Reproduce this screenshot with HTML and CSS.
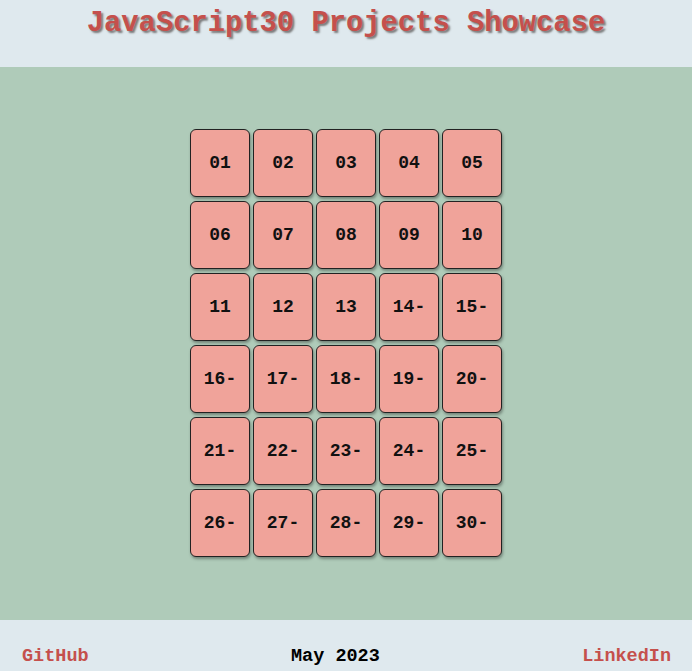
FILE: index.html
```html
<!DOCTYPE html>
<html lang="en">
<head>
<meta charset="utf-8">
<title>JavaScript30 Projects Showcase</title>
<link rel="stylesheet" href="styles.css">
</head>
<body>
<header class="site-header">
  <h1 class="title">JavaScript30 Projects Showcase</h1>
</header>
<main class="main">
  <div class="grid">
    <a class="card">01</a><a class="card">02</a><a class="card">03</a><a class="card">04</a><a class="card">05</a>
    <a class="card">06</a><a class="card">07</a><a class="card">08</a><a class="card">09</a><a class="card">10</a>
    <a class="card">11</a><a class="card">12</a><a class="card">13</a><a class="card">14-</a><a class="card">15-</a>
    <a class="card">16-</a><a class="card">17-</a><a class="card">18-</a><a class="card">19-</a><a class="card">20-</a>
    <a class="card">21-</a><a class="card">22-</a><a class="card">23-</a><a class="card">24-</a><a class="card">25-</a>
    <a class="card">26-</a><a class="card">27-</a><a class="card">28-</a><a class="card">29-</a><a class="card">30-</a>
  </div>
</main>
<footer class="site-footer">
  <a class="foot-link">GitHub</a>
  <span class="date">May 2023</span>
  <a class="foot-link">LinkedIn</a>
</footer>
</body>
</html>
```
FILE: styles.css
```css
html, body {
  margin: 0;
  padding: 0;
}
body {
  font-family: "Liberation Mono", "Courier New", monospace;
  background: #dfe9ee;
  height: 671px;
  overflow: hidden;
}
.site-header {
  height: 67px;
  box-sizing: border-box;
  padding-top: 7px;
  background: #dfe9ee;
}
.title {
  margin: 0;
  text-align: center;
  font-size: 28.8px;
  line-height: 34px;
  font-weight: bold;
  color: #c5504c;
  text-shadow: 2px 2px 2px #7a7a7a;
}
.main {
  height: 553px;
  background: #afcbb9;
  display: flex;
  align-items: center;
  justify-content: center;
}
.grid {
  display: grid;
  grid-template-columns: repeat(5, 60px);
  grid-auto-rows: 68px;
  column-gap: 3px;
  row-gap: 4px;
  margin-top: -2px;
}
.card {
  box-sizing: border-box;
  background: #f0a39a;
  border: 1px solid #222;
  border-radius: 6px;
  box-shadow: 1px 2px 3px rgba(0,0,0,0.35);
  display: flex;
  align-items: center;
  justify-content: center;
  font-size: 18px;
  font-weight: bold;
  color: #111;
}
.site-footer {
  height: 51px;
  box-sizing: border-box;
  display: flex;
  justify-content: space-between;
  align-items: flex-end;
  padding: 0 21px 3px 22px;
  font-size: 18.5px;
  font-weight: bold;
  line-height: 22px;
}
.foot-link {
  color: #c5504c;
}
.date {
  color: #000;
}
```
